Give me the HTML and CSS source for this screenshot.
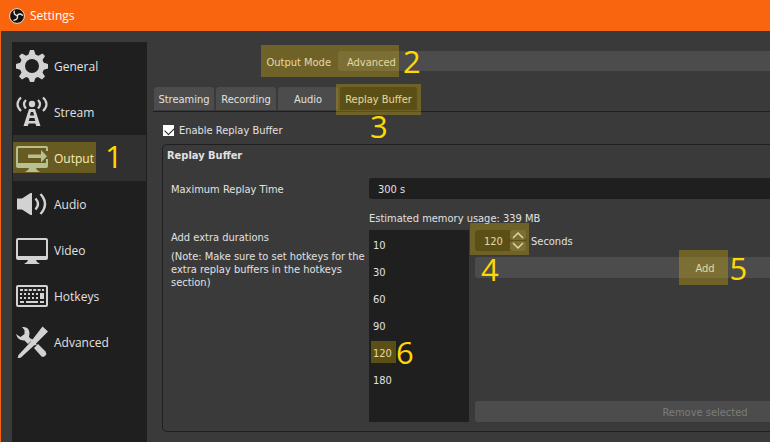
FILE: index.html
```html
<!DOCTYPE html>
<html lang="en">
<head>
<meta charset="utf-8">
<title>Settings</title>
<link rel="stylesheet" href="styles.css">
</head>
<body>
<header class="titlebar">
  <svg class="logo" viewBox="0 0 16 16" aria-hidden="true">
    <circle cx="8" cy="8" r="7.4" fill="#16130f" stroke="#f3ddd0" stroke-width="1"/>
    <g fill="none" stroke="#e4e0dc" stroke-width="1.4" stroke-linecap="round">
      <path d="M8.2 7.6C6 7.2 4.8 5.600 5.200 3.200"/>
      <path d="M8.200 7.600C9.600 5.600 11.600 5.400 13.400 7.200"/>
      <path d="M8.200 7.600C9.200 10 8 12 5 12.200"/>
    </g>
  </svg>
  <h1 class="title">Settings</h1>
</header>
<div class="window">
  <nav class="sidebar">
    <button class="nav-item" type="button">
      <svg class="icon" viewBox="0 0 32 32" aria-hidden="true"><path fill-rule="evenodd" d="M14 0h4l1.500 4.500 2.800 1.200L26.500 3.500 29 6l-2.500 4 1.300 2.800L32 14v4.500l-4.200 1.200-1.300 2.800 2.500 4-3 3-4.200-2.500-2.300 1L18 32h-4l-1.500-4-2.300-1L6 29.500l-3-3 2.500-4-1.300-2.800L0 18.500V14l4.200-1.200L5.500 10 3 6l3-2.500 4 2.200 2.500-1.200zM16 9a7 7 0 1 0 0 14 7 7 0 0 0 0-14z"/></svg>
      <span>General</span>
    </button>
    <button class="nav-item" type="button">
      <svg class="icon" viewBox="0 0 32 32" aria-hidden="true">
        <circle cx="16" cy="8" r="3.200"/>
        <path fill-rule="evenodd" d="M13 13h6l5.500 17h-4.300l-.8-2.500h-6.800l-.8 2.500H7.500zM14.800 16l-.8 3.500h4l-.8-3.500zM13.600 22l-.9 3h6.600l-.9-3z"/>
        <g fill="none" stroke="#d2d2d2" stroke-width="2.200"><path d="M10 4Q6 8 10 12.500M5 1.500Q-2 8 5 15M22 4Q26 8 22 12.500M27 1.500Q34 8 27 15"/></g>
      </svg>
      <span>Stream</span>
    </button>
    <button class="nav-item selected" type="button">
      <svg class="icon" viewBox="0 0 32 32" aria-hidden="true">
        <path d="M2 4h28q2 0 2 2v3h-2V6H2v15h28v-4h2v7q0 2-2 2H20l1 2 3 2H9l3-2 1-2H2q-2 0-2-2V6q0-2 2-2z"/>
        <path d="M12 12.500h13V8l6 6.200-6 6.300v-4.500H12z"/>
      </svg>
      <span>Output</span>
      <i class="highlight"></i><b class="step">1</b>
    </button>
    <button class="nav-item" type="button">
      <svg class="icon" viewBox="0 0 32 32" aria-hidden="true">
        <path d="M1 10.500h5L14.500 5H16v22h-1.500L6 21.500H1z"/>
        <g fill="none" stroke="#d2d2d2" stroke-width="2.400"><path d="M19.500 10.500q5 5.500 0 11M24.500 6q9 10 0 20"/></g>
      </svg>
      <span>Audio</span>
    </button>
    <button class="nav-item" type="button">
      <svg class="icon" viewBox="0 0 32 32" aria-hidden="true">
        <path fill-rule="evenodd" d="M2 4h28q2 0 2 2v18q0 2-2 2H20l1 2 3 2H8l3-2 1-2H2q-2 0-2-2V6q0-2 2-2zM2 6v16h28V6z"/>
      </svg>
      <span>Video</span>
    </button>
    <button class="nav-item" type="button">
      <svg class="icon" viewBox="0 0 32 32" aria-hidden="true">
        <path fill-rule="evenodd" d="M2 5h28q2 0 2 2v18q0 2-2 2H2q-2 0-2-2V7q0-2 2-2zM2 7v18h28V7z"/>
        <path fill="none" stroke="#d2d2d2" stroke-width="2" stroke-dasharray="3 1.400" d="M4 10h24"/>
        <path fill="none" stroke="#d2d2d2" stroke-width="2" stroke-dasharray="2 2" d="M4 14h18M4 18h18"/>
        <path d="M24 13h4v6h-4zM4 21h4v2H4zM10 21h12v2H10zM24 21h4v2h-4z"/>
      </svg>
      <span>Hotkeys</span>
    </button>
    <button class="nav-item" type="button">
      <svg class="icon" viewBox="0 0 32 32" aria-hidden="true">
        <path d="M26.500 0.500L32 5.500 20 17.500l1 1-3 1-13 12-3.500 1 1-3.500L14.500 16l1-3.500 1 1z"/>
        <path d="M6 1Q13 0 13.500 7l-.5 4 3 3-4 4-3.500-3.500Q2 15 0 8l4.500 3L8.500 8V4z"/>
        <path d="M18 22l4-4 7.500 7.500q1.500 2 0 4t-4 1z"/>
      </svg>
      <span>Advanced</span>
    </button>
  </nav>
  <main class="content">
    <div class="mode-row">
      <label for="mode">Output Mode</label>
      <select id="mode"><option>Advanced</option><option>Simple</option></select>
      <i class="highlight"></i><b class="step">2</b>
    </div>
    <div class="tabs" role="tablist">
      <button class="tab" type="button" role="tab">Streaming</button>
      <button class="tab" type="button" role="tab">Recording</button>
      <button class="tab" type="button" role="tab">Audio</button>
      <button class="tab active" type="button" role="tab" aria-selected="true">Replay Buffer<i class="highlight"></i><b class="step">3</b></button>
    </div>
    <label class="enable"><input type="checkbox" checked>Enable Replay Buffer</label>
    <section class="group">
      <h2 class="group-title">Replay Buffer</h2>
      <div class="form">
        <label for="max-time">Maximum Replay Time</label>
        <input class="field" id="max-time" type="text" value="300 s">
        <p class="memory">Estimated memory usage: 339 MB</p>
        <div class="help">
          <p>Add extra durations</p>
          <p>(Note: Make sure to set hotkeys for the extra replay buffers in the hotkeys section)</p>
        </div>
        <div class="durations">
          <ul class="list">
            <li>10</li>
            <li>30</li>
            <li>60</li>
            <li>90</li>
            <li>120<i class="highlight"></i><b class="step">6</b></li>
            <li>180</li>
          </ul>
          <div class="actions">
            <div class="seconds">
              <div class="spin">
                <input id="seconds" type="text" inputmode="numeric" value="120">
                <div class="arrows">
                  <button type="button" aria-label="Increase"><svg viewBox="0 0 16 10"><path d="M3 8l5-5 5 5"/></svg></button>
                  <button type="button" aria-label="Decrease"><svg viewBox="0 0 16 10"><path d="M3 2l5 5 5-5"/></svg></button>
                </div>
                <i class="highlight"></i><b class="step">4</b>
              </div>
              <label for="seconds">Seconds</label>
            </div>
            <button class="action" type="button"><span class="add">Add<i class="highlight"></i><b class="step">5</b></span></button>
            <button class="action remove" type="button" disabled>Remove selected</button>
          </div>
        </div>
      </div>
    </section>
  </main>
</div>
</body>
</html>
```
FILE: styles.css
```css
* { box-sizing: border-box; }
html, body { height: 100%; }
body {
  margin: 0;
  display: flex;
  flex-direction: column;
  overflow: hidden;
  background: #3a3a3a;
  color: #e1e1e1;
  font: 11px/13px "DejaVu Sans Condensed", "DejaVu Sans", sans-serif;
}
button, input, select {
  font: inherit;
  color: inherit;
  border: 0;
  margin: 0;
  padding: 0;
  background: none;
  appearance: none;
}
h1, h2, p, ul { margin: 0; padding: 0; }

.titlebar {
  flex: none;
  display: flex;
  align-items: center;
  gap: 5px;
  height: 31px;
  padding-left: 9px;
  background: #f9650f;
}
.logo { width: 16px; height: 16px; }
.title { font: 12px/16px "Open Sans", sans-serif; color: #fff; }

.window {
  flex: 1;
  display: flex;
  width: calc(100% + 178px);
  border-left: 1px solid #f9650f;
}
.sidebar {
  flex: none;
  width: 135px;
  margin: 11px 0 0 11px;
  padding: 1px;
  background: #1f1f1f;
}
.nav-item {
  position: relative;
  display: flex;
  align-items: center;
  gap: 6px;
  width: 100%;
  height: 46px;
  padding-left: 3px;
  font: 12px/16px "Open Sans", sans-serif;
}
.nav-item span { padding-top: 2px; }
.nav-item.selected { background: #303030; color: #fff; }
.icon { width: 32px; height: 32px; fill: #d2d2d2; }
.selected .icon { fill: #a3bfce; }

.highlight { position: absolute; background: rgba(235, 192, 0, .3); pointer-events: none; }
.step { position: absolute; font: 500 31px/30px "Open Sans", sans-serif; color: #ffd800; }
.selected .highlight { inset: 7px 50px 8px 0; }
.selected .step { left: 92px; top: 6px; }

.content { flex: 1; min-width: 0; padding: 20px 0 0 6px; }
.mode-row {
  position: relative;
  display: grid;
  grid-template-columns: 178px 1fr;
  gap: 7px;
  align-items: center;
}
.mode-row label { padding-top: 2px; text-align: right; }
.mode-row select { height: 20px; padding: 2px 0 0 9px; border-radius: 3px; background: #4c4c4c; }
.mode-row .highlight { left: 108px; top: -6px; width: 138px; height: 32px; }
.mode-row .step { left: 250px; top: -5px; }

.tabs {
  display: flex;
  gap: 2px;
  height: 25px;
  margin-top: 16px;
  padding-left: 1px;
  border-bottom: 1px solid #1f1f1f;
}
.tab {
  position: relative;
  width: 60px;
  height: 23px;
  padding-top: 2px;
  border-radius: 3px 3px 0 0;
  background: #4c4c4c;
  white-space: nowrap;
}
.tab.active { width: 77px; background: #1f1f1f; }
.tab .highlight { inset: -3px -4px -5px; }
.tab .step { left: 30px; top: 24px; }

.enable { display: flex; align-items: center; gap: 5px; height: 12px; margin: 12px 0 0 10px; }
.enable input { width: 11px; height: 11px; background: #fff; }
.enable input:checked::before {
  content: "";
  display: block;
  width: 8px;
  height: 5px;
  margin: 2px;
  border: solid #222;
  border-width: 0 0 1px 1px;
  transform: rotate(-45deg);
}

.group { margin: 8px 0 0 9px; padding: 0 12px 9px 8px; border: 1px solid #1f1f1f; border-radius: 5px; }
.group-title { margin-left: -4px; padding-top: 1px; font-size: 11px; line-height: 20px; }
.form { display: grid; grid-template-columns: 196px 1fr; column-gap: 2px; margin-top: 12px; align-items: center; }
.form > label { padding-top: 2px; }
.field { height: 21px; padding: 2px 0 0 9px; border-radius: 3px; background: #1f1f1f; }
.memory { grid-column: 2; margin: 13px 0 5px; }
.help { align-self: start; display: grid; gap: 6px; padding-top: 1px; }
.durations { display: flex; gap: 6px; }
.list { width: 100px; height: 192px; padding: 2px 0; background: #1f1f1f; list-style: none; }
.list li { position: relative; padding-left: 4px; line-height: 27px; }
.list .highlight { left: 2px; top: 1px; width: 25px; height: 22px; }
.list .step { left: 27px; top: -3px; }

.actions { flex: 1; display: flex; flex-direction: column; gap: 6px; }
.seconds { display: flex; align-items: center; gap: 5px; }
.seconds label { padding-top: 2px; }
.spin { position: relative; display: flex; width: 51px; height: 21px; border-radius: 3px; background: #1f1f1f; }
.spin input { width: 35px; padding: 2px 0 0 9px; }
.arrows { display: grid; gap: 1px; width: 16px; }
.arrows button { display: flex; border-radius: 2px; background: #4c4c4c; }
.arrows svg { width: 16px; height: 10px; fill: none; stroke: #e1e1e1; stroke-width: 1.5; }
.spin .highlight { inset: -7px -3px -4px -5px; }
.spin .step { left: 6px; top: 24px; }
.action { height: 21px; padding-top: 2px; border-radius: 3px; background: #4c4c4c; }
.add { position: relative; display: inline-block; }
.add .highlight { inset: -12px -13px -10px -16px; }
.add .step { left: 34px; top: -9px; }
.remove { margin-top: auto; color: #7c7c7c; }
```
